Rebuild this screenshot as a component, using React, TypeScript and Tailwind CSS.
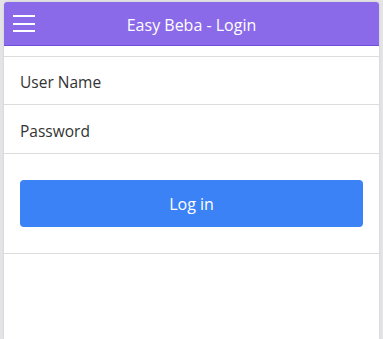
import React from "react";

export default function App() {
  return (
    <div className="w-[383px] h-[339px] bg-[#e4e4e7] pt-[2px] pl-[4px] pr-[4px]" style={{ fontFamily: '"Open Sans", sans-serif' }}>
      <div className="w-[375px] h-[337px] bg-white rounded-t-[3px] shadow-[0_0_2px_rgba(0,0,0,0.15)] flex flex-col">
        <div className="h-[44px] bg-[#8b6ae9] border-b border-[#6f4fdc] rounded-t-[3px] flex items-center relative">
          <div className="absolute left-[9px] top-[13px] flex flex-col gap-[5.5px]">
            <div className="w-[22px] h-[2px] bg-white" />
            <div className="w-[22px] h-[2px] bg-white" />
            <div className="w-[22px] h-[2px] bg-white" />
          </div>
          <div className="flex-1 text-center text-white text-[16px] leading-none pt-[2px]">Easy Beba - Login</div>
        </div>
        <div className="h-[10px]" />
        <div className="border-t border-[#dcdcdc]">
          <div className="h-[47px] flex items-center pl-[16px] pt-[5px] text-[15.5px] text-[#333]">User Name</div>
          <div className="border-t border-[#dcdcdc] h-[49px] flex items-center pl-[16px] pt-[5px] text-[15.5px] text-[#333]">Password</div>
          <div className="border-t border-[#dcdcdc] px-[16px] pt-[26px] pb-[26px]">
            <button className="w-full h-[47px] rounded-[4px] bg-[#3b82f6] text-white text-[16px] pt-[1px]">Log in</button>
          </div>
          <div className="border-t border-[#dcdcdc]" />
        </div>
      </div>
    </div>
  );
}
